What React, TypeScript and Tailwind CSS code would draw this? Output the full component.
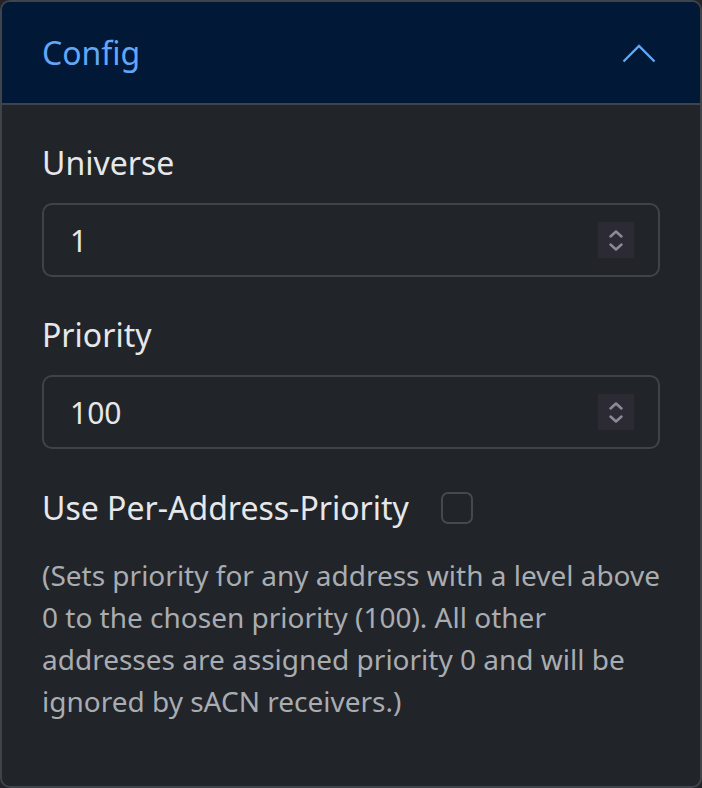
import React from "react";

function Spinner() {
  return (
    <div className="flex h-[36px] w-[36px] flex-col items-center justify-center gap-[3px] bg-[#2c2b33]">
      <svg width="16" height="10" viewBox="0 0 16 10" fill="none">
        <path d="M2.5 7.5 L8 2.5 L13.5 7.5" stroke="#8b8a96" strokeWidth="2.5" strokeLinecap="round" strokeLinejoin="round" />
      </svg>
      <svg width="16" height="10" viewBox="0 0 16 10" fill="none">
        <path d="M2.5 2.5 L8 7.5 L13.5 2.5" stroke="#8b8a96" strokeWidth="2.5" strokeLinecap="round" strokeLinejoin="round" />
      </svg>
    </div>
  );
}

function NumberField({ value }: { value: string }) {
  return (
    <div className="flex h-[74px] items-center justify-between rounded-[10px] border-2 border-[#3f444b] pl-[26px] pr-[24px]">
      <span className="text-[30px] text-[#e6e7e9]">{value}</span>
      <Spinner />
    </div>
  );
}

export default function App() {
  return (
    <div
      className="h-[788px] w-[702px] bg-[#212429]"
      style={{ fontFamily: '"Noto Sans", "Open Sans", sans-serif' }}
    >
      <div className="flex h-full w-full flex-col overflow-hidden rounded-[10px] border-2 border-[#3f444b] bg-[#212429]">
        <div className="flex h-[103px] shrink-0 items-center justify-between border-b-2 border-[#3f444b] bg-[#011836] pl-[40px] pr-[44px]">
          <span className="text-[32px] leading-none text-[#62a6f7]">Config</span>
          <svg width="34" height="20" viewBox="0 0 34 20" fill="none">
            <path d="M1.5 18.5 L17 3 L32.5 18.5" stroke="#62a6f7" strokeWidth="2.4" />
          </svg>
        </div>
        <div className="flex flex-col px-[40px] pt-[36px]">
          <div className="text-[32px] leading-[44px] text-[#e6e7e9]">Universe</div>
          <div className="mt-[18px]">
            <NumberField value="1" />
          </div>
          <div className="mt-[36px] text-[32px] leading-[44px] text-[#e6e7e9]">Priority</div>
          <div className="mt-[18px]">
            <NumberField value="100" />
          </div>
          <div className="mt-[37px] flex items-center gap-[32px]">
            <span className="text-[32px] leading-[44px] text-[#e6e7e9]">Use Per-Address-Priority</span>
            <div className="h-[32px] w-[32px] rounded-[7px] border-2 border-[#444950]" />
          </div>
          <p className="mr-[-14px] mt-[24px] text-[28px] leading-[42px] text-[#a9acb1]">
            (Sets priority for any address with a level above 0 to the chosen priority (100). All other
            addresses are assigned priority 0 and will be ignored by sACN receivers.)
          </p>
        </div>
      </div>
    </div>
  );
}
